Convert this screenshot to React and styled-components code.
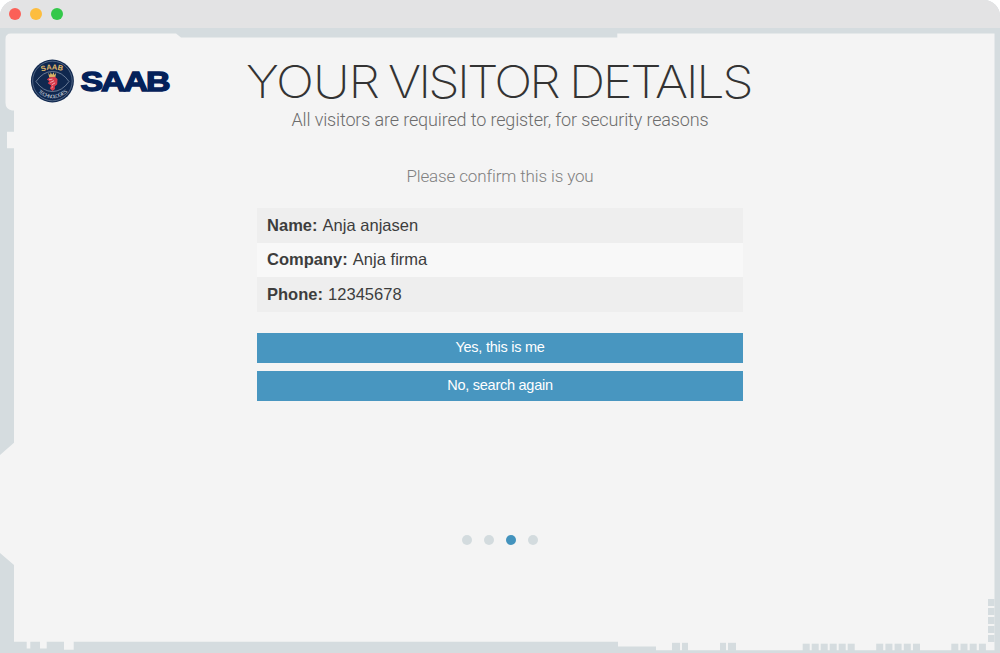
import React from "react";
import styled, { createGlobalStyle } from "styled-components";

const GlobalStyle = createGlobalStyle`
  * { box-sizing: border-box; }
  body { margin: 0; background: #fff; font-family: "Liberation Sans", Arial, sans-serif; }
`;

const Window = styled.div`
  position: relative;
  display: flex;
  flex-direction: column;
  width: 1000px;
  height: 653px;
  overflow: hidden;
  border-radius: 16px 16px 0 0;
  background: #d5dcdf;
`;

const TitleBar = styled.div`
  display: flex;
  align-items: center;
  gap: 9px;
  height: 28px;
  padding-left: 9px;
  background: #e3e3e4;
`;

const Light = styled.span`
  width: 12px;
  height: 12px;
  border-radius: 50%;
  background: ${(p) => p.$color};
`;

const Frame = styled.svg`
  position: absolute;
  inset: 0;
`;

const Screen = styled.main`
  position: relative;
  flex: 1;
  display: grid;
  grid-template-columns: 257px 486px 257px;
`;

const Brand = styled.div`
  padding: 31px 0 0 30px;
  svg { display: block; }
`;

const Content = styled.div`
  display: flex;
  flex-direction: column;
  align-items: center;
`;

const Heading = styled.h1`
  display: flex;
  flex: none;
  width: 508px;
  height: 50px;
  margin: 29px 0 0;
  font: 200 45px/49px Inter, sans-serif;
  color: #333;
  white-space: nowrap;
`;

const Word = styled.span`
  flex: none;
  width: ${(p) => p.$width}px;
  letter-spacing: ${(p) => p.$tracking}px;
  transform: scaleX(1.12);
  transform-origin: left;
`;

const Subtitle = styled.p`
  margin: 0;
  font: 300 18px/25px Roboto, sans-serif;
  letter-spacing: -0.14px;
  color: #6c6c6c;
  white-space: nowrap;
`;

const Prompt = styled(Subtitle)`
  margin-top: 32px;
  font-size: 17px;
  letter-spacing: -0.13px;
  color: #808080;
`;

const Details = styled.dl`
  width: 100%;
  margin: 19px 0 21px;
`;

const Detail = styled.div`
  display: flex;
  align-items: center;
  gap: 5px;
  height: 34.6px;
  padding: 0 10px;
  font-size: 16.5px;
  letter-spacing: 0.02px;
  color: #3d3d3d;
  background: #eee;
  &:nth-child(even) { background: #f8f8f8; }
  dt { font-weight: 700; }
  dd { margin: 0; }
`;

const Button = styled.button`
  width: 100%;
  height: 30px;
  margin: 0 0 8px;
  padding: 0 0 1px;
  border: 0;
  background: #4896c0;
  color: #fff;
  font: 14.5px/29px "Liberation Sans", Arial, sans-serif;
  letter-spacing: -0.26px;
`;

const Steps = styled.div`
  display: flex;
  gap: 12.2px;
  margin-top: 126px;
`;

const Step = styled.span`
  width: 10px;
  height: 10px;
  border-radius: 50%;
  background: ${(p) => (p.$active ? "#4393bd" : "#d3dbde")};
`;

const bottomBlocks = [
  [672, 8], [682, 6], [720, 6], [728, 8],
  ...[0, 1, 2, 3, 4, 5].map((i) => [802.7 + i * 9, 7]),
  ...[0, 1, 2, 3, 4].map((i) => [876.2 + i * 9.2, 7]),
  ...[0, 1, 2, 3].map((i) => [951.3 + i * 9.2, 7]),
];

const sideBlocks = [599, 608, 617, 626, 635];

function PanelFrame() {
  return (
    <Frame width="1000" height="653" aria-hidden="true">
      <path
        fill="#f4f4f4"
        d="M11 33.5H176L181 37.5H617.3V33.5H994.5V650.3H656V646.6H618V641.7H73.7V649.7H64V641.7H46.7V648.5H40V641.7H30.3V648.5H26.7V641.7H14V565L0 553V455L14 442.7V148.3H7V131.7H14V110.5H12Q5.5 109 5.5 103V39Q5.5 33.5 11 33.5Z"
      />
      <g fill="#d5dcdf">
        {bottomBlocks.map(([x, w]) => (
          <rect key={x} x={x} y={x < 750 ? 642.8 : 643.7} width={w} height="8" />
        ))}
        {sideBlocks.map((y) => (
          <rect key={y} x="988" y={y} width="6.5" height="7" />
        ))}
      </g>
    </Frame>
  );
}

function Logo() {
  return (
    <svg width="145" height="46" viewBox="30 59 145 46" role="img" aria-label="SAAB">
      <defs>
        <path id="badge-top" d="M41.5 71.5Q52.3 67.8 63.6 71.5" />
        <path id="badge-bottom" d="M37 91.5Q52.3 105 68 91.5" />
      </defs>
      <circle cx="52.4" cy="81" r="21.5" fill="#10284f" />
      <circle cx="52.4" cy="81" r="19.8" fill="none" stroke="#8fa0b8" strokeWidth=".5" />
      <path d="M36 81.5Q43 71.5 52.4 71.5Q62 71.5 69 81.5Q62 91.5 52.4 91.5Q43 91.5 36 81.5Z" fill="none" stroke="#a5b1c4" strokeWidth=".6" />
      <text fontFamily="Liberation Sans, sans-serif" fontWeight="700" fontSize="7.5" fill="#e0b968">
        <textPath href="#badge-top">SAAB</textPath>
      </text>
      <text fontFamily="Liberation Sans, sans-serif" fontSize="5.2" letterSpacing="-0.75" fill="#c2cad7" textAnchor="middle">
        <textPath href="#badge-bottom" startOffset="50%">TECHNOLOGIES</textPath>
      </text>
      <path d="M48.2 72.8L50 75L50.6 72.2L52.2 74.8L53.7 72.2L54.4 75L56.2 72.8L55.3 77.4H49.2Z" fill="#d9b365" />
      <path d="M49.3 77.5L54.8 76.8L57.5 79L57.2 84.3L54.7 86.4L55 89L52.5 91L49.9 88.6L51.1 85.5L47.8 83.2L49.4 81.2L46.9 79.4Z" fill="#d83a4c" />
      <path d="M49 79.7L52.5 79.1M50.3 82.5L54 80.7M51.8 84.8L55.1 82.8M51.4 88L53 86.5" stroke="#f2b8bb" strokeWidth=".9" />
      <text
        transform="translate(80.5 90.6) scale(1.26 1)"
        letterSpacing="-1.7"
        fontFamily="Liberation Sans, sans-serif" fontWeight="700" fontSize="27"
        fill="#04215a" stroke="#04215a" strokeWidth="1.3"
      >SAAB</text>
    </svg>
  );
}

const visitor = [
  ["Name:", "Anja anjasen"],
  ["Company:", "Anja firma"],
  ["Phone:", "12345678"],
];

export default function App() {
  return (
    <>
      <GlobalStyle />
      <Window>
        <TitleBar>
          <Light $color="#fb6058" />
          <Light $color="#fdbd3e" />
          <Light $color="#34c84a" />
        </TitleBar>
        <PanelFrame />
        <Screen>
          <Brand><Logo /></Brand>
          <Content>
            <Heading>
              <Word $width={141.6} $tracking={-1}>YOUR</Word>
              <Word $width={181.4} $tracking={-2.5}>VISITOR</Word>
              <Word $width={185} $tracking={-2.1}>DETAILS</Word>
            </Heading>
            <Subtitle>All visitors are required to register, for security reasons</Subtitle>
            <Prompt>Please confirm this is you</Prompt>
            <Details>
              {visitor.map(([label, value]) => (
                <Detail key={label}><dt>{label}</dt><dd>{value}</dd></Detail>
              ))}
            </Details>
            <Button type="button">Yes, this is me</Button>
            <Button type="button">No, search again</Button>
            <Steps>
              {[0, 1, 2, 3].map((i) => <Step key={i} $active={i === 2} />)}
            </Steps>
          </Content>
        </Screen>
      </Window>
    </>
  );
}
